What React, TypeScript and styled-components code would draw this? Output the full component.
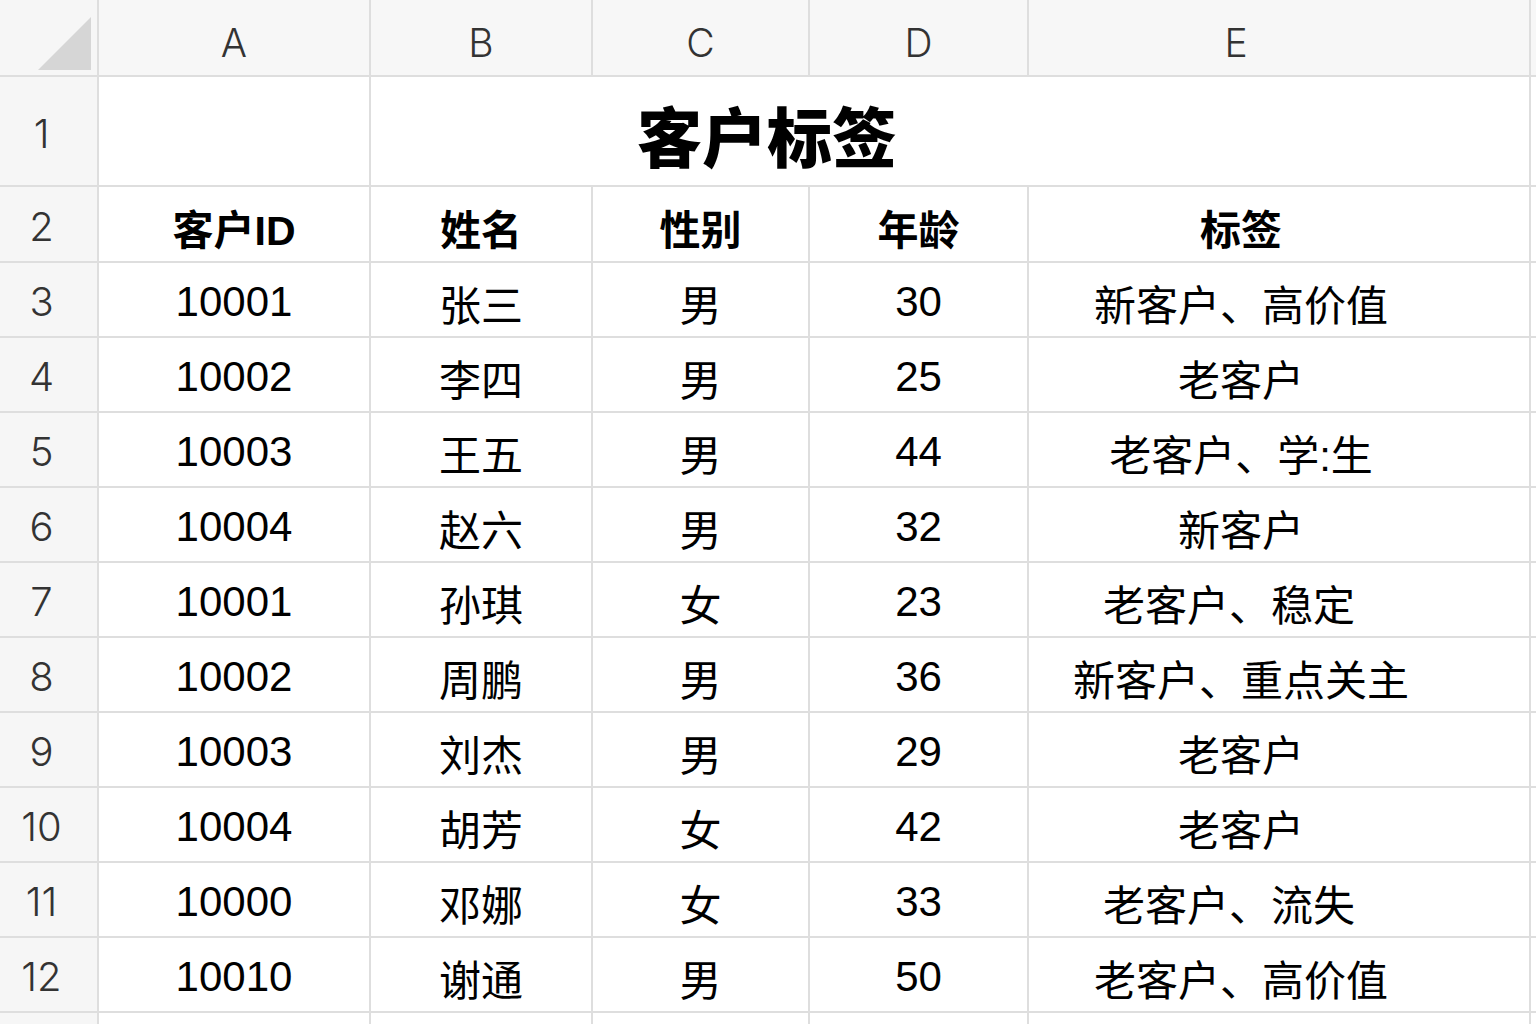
import React from 'react';
import styled, { createGlobalStyle } from 'styled-components';

interface IRow {
  id: string;
  name: string;
  gender: string;
  age: string;
  tags: string;
}

const rows: IRow[] = [
  { id: '10001', name: '张三', gender: '男', age: '30', tags: '新客户、高价值' },
  { id: '10002', name: '李四', gender: '男', age: '25', tags: '老客户' },
  { id: '10003', name: '王五', gender: '男', age: '44', tags: '老客户、学:生' },
  { id: '10004', name: '赵六', gender: '男', age: '32', tags: '新客户' },
  { id: '10001', name: '孙琪', gender: '女', age: '23', tags: '老客户、稳定' },
  { id: '10002', name: '周鹏', gender: '男', age: '36', tags: '新客户、重点关主' },
  { id: '10003', name: '刘杰', gender: '男', age: '29', tags: '老客户' },
  { id: '10004', name: '胡芳', gender: '女', age: '42', tags: '老客户' },
  { id: '10000', name: '邓娜', gender: '女', age: '33', tags: '老客户、流失' },
  { id: '10010', name: '谢通', gender: '男', age: '50', tags: '老客户、高价值' },
];

const columns = ['A', 'B', 'C', 'D', 'E'];

const GlobalStyle = createGlobalStyle`
  html, body {
    margin: 0;
    padding: 0;
    background: #ffffff;
    overflow: hidden;
  }
  body {
    font-family: 'Liberation Sans', 'Noto Sans CJK SC', sans-serif;
  }
`;

const LINE = '#dedede';

const Sheet = styled.div`
  display: grid;
  grid-template-columns: 99px 272px 222px 217px 219px 502px 5px;
  grid-template-rows: 77px 110px 76px repeat(11, 75px);
  width: 1536px;
  height: 1024px;
  overflow: hidden;
  background: #ffffff;
`;

const Corner = styled.div`
  position: relative;
  background: #f6f6f6;
  border-right: 2px solid ${LINE};
  border-bottom: 2px solid ${LINE};
`;

const CornerMark = styled.div`
  position: absolute;
  left: 38px;
  top: 17px;
  width: 53px;
  height: 53px;
  background: #d6d6d6;
  clip-path: polygon(100% 0, 100% 100%, 0 100%);
`;

const ColHead = styled.div<{ $shift?: number }>`
  display: flex;
  align-items: center;
  justify-content: center;
  padding-top: 9px;
  padding-right: ${p => p.$shift || 0}px;
  background: #f7f7f7;
  border-right: 2px solid ${LINE};
  border-bottom: 2px solid ${LINE};
  color: #333333;
  font-family: 'Inter', 'Liberation Sans', sans-serif;
  font-weight: 300;
  font-size: 39px;
`;

const RowHead = styled.div`
  display: flex;
  align-items: center;
  justify-content: center;
  padding-right: 14px;
  padding-top: 4px;
  background: #f6f6f6;
  border-right: 2px solid ${LINE};
  border-bottom: 2px solid ${LINE};
  color: #333333;
  font-family: 'Inter', 'Liberation Sans', sans-serif;
  font-weight: 300;
  font-size: 40px;
`;

const Cell = styled.div<{ $shift?: number; $bold?: boolean }>`
  display: flex;
  align-items: center;
  justify-content: center;
  padding-top: ${p => (p.$bold ? 6 : 5)}px;
  padding-right: ${p => p.$shift || 0}px;
  border-right: 2px solid ${LINE};
  border-bottom: 2px solid ${LINE};
  color: #000000;
  font-family: 'Liberation Sans', 'Noto Sans CJK SC', sans-serif;
  font-size: ${p => (p.$bold ? 41 : 42)}px;
  font-weight: ${p => (p.$bold ? 700 : 400)};
  white-space: nowrap;
`;

const TitleCell = styled.div`
  grid-column: span 4;
  display: flex;
  align-items: center;
  justify-content: center;
  padding-top: 6px;
  padding-right: 366px;
  border-right: 2px solid ${LINE};
  border-bottom: 2px solid ${LINE};
  color: #000000;
  font-family: 'Noto Sans CJK SC', sans-serif;
  font-size: 65px;
  font-weight: 900;
`;

const Filler = styled.div<{ $head?: boolean }>`
  background: ${p => (p.$head ? '#f7f7f7' : '#ffffff')};
  border-bottom: 2px solid ${LINE};
`;

const E_SHIFT = 76;

const App: React.FC = () => {
  return (
    <>
      <GlobalStyle />
      <Sheet>
        <Corner>
          <CornerMark />
        </Corner>
        {columns.map(col => (
          <ColHead key={col} $shift={col === 'E' ? E_SHIFT + 10 : 0}>{col}</ColHead>
        ))}
        <Filler $head />

        <RowHead>1</RowHead>
        <Cell />
        <TitleCell>客户标签</TitleCell>
        <Filler />

        <RowHead>2</RowHead>
        <Cell $bold>客户ID</Cell>
        <Cell $bold>姓名</Cell>
        <Cell $bold>性别</Cell>
        <Cell $bold>年龄</Cell>
        <Cell $bold $shift={E_SHIFT}>标签</Cell>
        <Filler />

        {rows.map((row, i) => (
          <React.Fragment key={i}>
            <RowHead>{i + 3}</RowHead>
            <Cell>{row.id}</Cell>
            <Cell>{row.name}</Cell>
            <Cell>{row.gender}</Cell>
            <Cell>{row.age}</Cell>
            <Cell $shift={row.tags.length === 6 ? E_SHIFT + 24 : E_SHIFT}>{row.tags}</Cell>
            <Filler />
          </React.Fragment>
        ))}

        <RowHead />
        <Cell />
        <Cell />
        <Cell />
        <Cell />
        <Cell />
        <Filler />
      </Sheet>
    </>
  );
};

export default App;
